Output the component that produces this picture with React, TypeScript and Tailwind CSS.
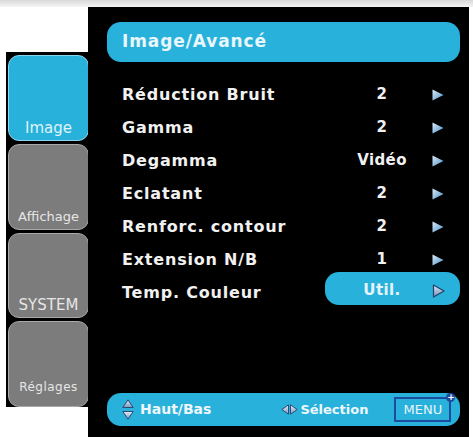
const font = { fontFamily: '"DejaVu Sans", Verdana, sans-serif' };

function RightArrow() {
  return (
    <svg width="12" height="12" viewBox="0 0 12 12">
      <defs>
        <linearGradient id="ra" x1="0" y1="0" x2="1" y2="1">
          <stop offset="0" stopColor="#dceaf6" />
          <stop offset="1" stopColor="#4a92cc" />
        </linearGradient>
      </defs>
      <path d="M0.5 0.5 L11.5 6 L0.5 11.5 Z" fill="url(#ra)" />
    </svg>
  );
}

function PillArrow() {
  return (
    <svg width="13" height="14" viewBox="0 0 13 14">
      <defs>
        <linearGradient id="pa" x1="0" y1="0" x2="0" y2="1">
          <stop offset="0" stopColor="#dfe9f2" />
          <stop offset="1" stopColor="#6f8fb4" />
        </linearGradient>
      </defs>
      <path d="M1.5 1 L12 7 L1.5 13 Z" fill="url(#pa)" stroke="#23406e" strokeWidth="1.2" strokeLinejoin="round" />
    </svg>
  );
}

function UpDown() {
  return (
    <svg width="12" height="21" viewBox="0 0 12 21">
      <defs>
        <linearGradient id="ud" x1="0" y1="0" x2="0" y2="1">
          <stop offset="0" stopColor="#e4eef6" />
          <stop offset="1" stopColor="#7a98bc" />
        </linearGradient>
      </defs>
      <path d="M6 0.8 L11.2 8.5 L0.8 8.5 Z" fill="url(#ud)" stroke="#2b4a78" strokeWidth="1" />
      <path d="M0.8 12.5 L11.2 12.5 L6 20.2 Z" fill="url(#ud)" stroke="#2b4a78" strokeWidth="1" />
    </svg>
  );
}

function LeftRight() {
  return (
    <svg width="17" height="11" viewBox="0 0 17 11">
      <defs>
        <linearGradient id="lr" x1="0" y1="0" x2="0" y2="1">
          <stop offset="0" stopColor="#e4eef6" />
          <stop offset="1" stopColor="#7a98bc" />
        </linearGradient>
      </defs>
      <path d="M7.5 0.8 L7.5 10.2 L0.8 5.5 Z" fill="url(#lr)" stroke="#2b4a78" strokeWidth="1" />
      <path d="M9.5 0.8 L16.2 5.5 L9.5 10.2 Z" fill="url(#lr)" stroke="#2b4a78" strokeWidth="1" />
    </svg>
  );
}

const rows = [
  { label: "Réduction Bruit", value: "2" },
  { label: "Gamma", value: "2" },
  { label: "Degamma", value: "Vidéo" },
  { label: "Eclatant", value: "2" },
  { label: "Renforc. contour", value: "2" },
  { label: "Extension N/B", value: "1" },
];

const tabs = [
  { name: "Image", active: true, size: "text-[15px] pb-[3px]" },
  { name: "Affichage", active: false, size: "text-[13px] pb-[4px]" },
  { name: "SYSTEM", active: false, size: "text-[15px] pb-[3px]" },
  { name: "Réglages", active: false, size: "text-[12px] tracking-[0.5px] pb-[10px]" },
];

export default function App() {
  return (
    <div className="w-[473px] h-[437px] bg-white flex flex-col overflow-hidden" style={font}>
      <div className="h-[7px] bg-gradient-to-b from-[#d9d9d9] to-[#f4f4f4]" />
      <div className="flex flex-1">
        {/* left tabs */}
        <div className="ml-[6px] mt-[45px] w-[82px] h-[355px] bg-black flex flex-col gap-[3px] pt-[3px] pl-[2px]">
          {tabs.map((t) => (
            <div
              key={t.name}
              className={`h-[86px] w-[81px] rounded-[11px] border flex items-end justify-center ${
                t.active
                  ? "bg-[#28b1da] border-[#8ed6ee] text-[#dff3fa]"
                  : "bg-[#7c7c7c] border-[#a9a9a9] text-[#e6e6e6]"
              }`}
            >
              <span className={`leading-[17px] ${t.size}`}>{t.name}</span>
            </div>
          ))}
        </div>

        {/* main panel */}
        <div className="w-[381px] h-[430px] bg-black flex flex-col pl-[19px] pr-[9px]">
          <div className="mt-[15px] h-[40px] rounded-[14px] bg-[#28b1da] flex items-center pl-[15px]">
            <span className="text-[17px] font-bold tracking-[0.9px] text-[#e9f6fb]">Image/Avancé</span>
          </div>

          <div className="mt-[16px] flex flex-col">
            {rows.map((r) => (
              <div key={r.label} className="h-[33px] flex items-center text-[#f1f1f1] font-bold text-[16px] tracking-[0.8px]">
                <span className="w-[218px] pl-[15px]">{r.label}</span>
                <span className="ml-[7px] w-[100px] text-center text-[15px] tracking-[0.4px]">{r.value}</span>
                <span className="w-[12px] flex items-center">
                  <RightArrow />
                </span>
              </div>
            ))}
            <div className="h-[33px] flex items-center text-[#f1f1f1] font-bold text-[16px] tracking-[0.8px]">
              <span className="w-[218px] pl-[15px]">Temp. Couleur</span>
              <div className="relative -top-[4px] w-[135px] h-[33px] rounded-[14px] bg-[#28b1da] flex items-center pt-[4px]">
                <span className="ml-[7px] w-[100px] text-center text-[15px] tracking-[0.4px] text-[#e6f4fa]">Util.</span>
                <PillArrow />
              </div>
            </div>
          </div>

          <div className="mt-auto mb-[11px] h-[33px] rounded-[14px] bg-[#28b1da] flex items-center pl-[15px] text-[#eef7fb] font-bold">
            <UpDown />
            <span className="ml-[6px] text-[14px]">Haut/Bas</span>
            <span className="ml-[70px] flex items-center">
              <LeftRight />
            </span>
            <span className="ml-[2px] text-[13px]">Sélection</span>
            <div className="relative ml-[26px] h-[25px] w-[57px] border-2 border-[#1d4b9e] flex items-center justify-center">
              <span className="text-[13px] font-normal text-[#e8f4fa]">MENU</span>
              <span className="absolute -top-[6px] -right-[6px] w-[9px] h-[9px] rounded-full bg-[#1d4b9e] text-white text-[9px] leading-[9px] font-bold flex items-center justify-center">
                +
              </span>
            </div>
          </div>
        </div>
      </div>
    </div>
  );
}
